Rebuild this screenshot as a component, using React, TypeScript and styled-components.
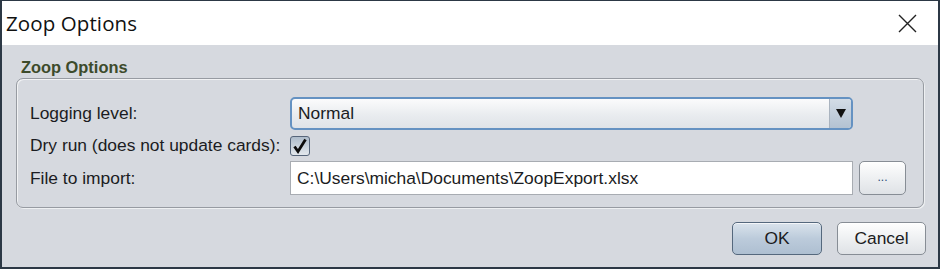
import React from 'react'
import styled, { createGlobalStyle } from 'styled-components'

const GlobalStyle = createGlobalStyle`
  html, body {
    margin: 0;
    padding: 0;
    background: #ffffff;
  }
  * {
    box-sizing: border-box;
  }
`

const LABEL_FONT = `"Liberation Sans", Arial, sans-serif`

const Window = styled.div`
  width: 940px;
  height: 269px;
  display: flex;
  flex-direction: column;
  border: 2px solid #2c3845;
  border-top-width: 1px;
  background: #d6d9df;
  font-family: ${LABEL_FONT};
  color: #1b1c22;
  overflow: hidden;
`

const TitleBar = styled.div`
  height: 44px;
  flex: none;
  display: flex;
  align-items: center;
  justify-content: space-between;
  background: #ffffff;
  padding: 0 21px 0 4px;
`

const Title = styled.div`
  font-family: "Open Sans", "Noto Sans", sans-serif;
  font-size: 20.5px;
  color: #111;
  letter-spacing: 0.1px;
`

const CloseIcon = styled.svg`
  width: 19px;
  height: 19px;
  display: block;
`

const Content = styled.div`
  flex: 1;
  display: flex;
  flex-direction: column;
  padding: 12px 12px 0 14px;
`

const GroupLabel = styled.div`
  font-size: 16.4px;
  font-weight: bold;
  line-height: 20px;
  color: #3d4b2b;
  padding-left: 5px;
  height: 21px;
`

const Group = styled.div`
  width: 908px;
  height: 130px;
  border: 1px solid #979ba2;
  box-shadow: inset 1px 1px 0 #f1f2f4, 1px 1px 0 #eef0f2;
  border-radius: 7px;
  padding: 18px 16px 0 13px;
  display: grid;
  grid-template-columns: 254px 563px 47px;
  grid-template-rows: 33px 25px 34px;
  column-gap: 6px;
  row-gap: 3px;
  align-items: center;
`

const FieldLabel = styled.div`
  font-size: 17.4px;
  white-space: nowrap;
`

const Combo = styled.div`
  grid-column: 2 / 3;
  height: 33px;
  display: flex;
  border: 2px solid #6592c2;
  border-radius: 5px;
  background: linear-gradient(#fbfbfc, #e9ecef 55%, #dfe3e8);
  overflow: hidden;
`

const ComboValue = styled.div`
  flex: 1;
  display: flex;
  align-items: center;
  padding-left: 6px;
  font-size: 17.4px;
`

const ComboArrow = styled.div`
  width: 22px;
  display: flex;
  align-items: center;
  justify-content: center;
  border-left: 1px solid #a9b3bf;
  background: linear-gradient(#d3dce6, #b3c2d2);
`

const Triangle = styled.div`
  width: 0;
  height: 0;
  border-left: 5px solid transparent;
  border-right: 5px solid transparent;
  border-top: 9px solid #111;
`

const CheckBox = styled.div`
  width: 20px;
  height: 20px;
  border: 1px solid #56657a;
  border-radius: 3px;
  background: linear-gradient(#aebccb, #e3e8ed);
  display: flex;
  align-items: center;
  justify-content: center;
`

const TextField = styled.div`
  height: 34px;
  background: #ffffff;
  border: 1px solid #a8acb2;
  display: flex;
  align-items: center;
  padding-left: 6px;
  font-size: 17.4px;
  white-space: nowrap;
`

const Button = styled.div<{ $primary?: boolean; $width: number }>`
  width: ${p => p.$width}px;
  height: 33px;
  display: flex;
  align-items: center;
  justify-content: center;
  font-size: 17.4px;
  border-radius: 5px;
  border: 1px solid ${p => (p.$primary ? '#55687d' : '#878d95')};
  background: ${p =>
    p.$primary
      ? 'linear-gradient(#dae3ec, #bccbdb 50%, #aebfd1)'
      : 'linear-gradient(#fefefe, #eef0f2 50%, #dfe2e6)'};
  box-shadow: inset 0 1px 0 rgba(255, 255, 255, 0.7);
`

const BrowseButton = styled(Button)`
  height: 34px;
  font-size: 12px;
  color: #2c4a78;
  padding-bottom: 2px;
`

const ButtonBar = styled.div`
  display: flex;
  justify-content: flex-end;
  gap: 15px;
  margin-top: 14px;
`

export default function App() {
  return (
    <>
      <GlobalStyle />
      <Window>
        <TitleBar>
          <Title>Zoop Options</Title>
          <CloseIcon viewBox="0 0 19 19">
            <path d="M1 1 L18 18 M18 1 L1 18" stroke="#222" strokeWidth="1.4" fill="none" />
          </CloseIcon>
        </TitleBar>
        <Content>
          <GroupLabel>Zoop Options</GroupLabel>
          <Group>
            <FieldLabel>Logging level:</FieldLabel>
            <Combo>
              <ComboValue>Normal</ComboValue>
              <ComboArrow>
                <Triangle />
              </ComboArrow>
            </Combo>
            <span />
            <FieldLabel>Dry run (does not update cards):</FieldLabel>
            <CheckBox>
              <svg width="16" height="16" viewBox="0 0 16 16">
                <path
                  d="M2.5 8.5 L6 13.5 L13.5 1.5"
                  stroke="#0c0c0c"
                  strokeWidth="2.8"
                  fill="none"
                  strokeLinejoin="miter"
                />
              </svg>
            </CheckBox>
            <span />
            <FieldLabel>File to import:</FieldLabel>
            <TextField>C:\Users\micha\Documents\ZoopExport.xlsx</TextField>
            <BrowseButton $width={47}>...</BrowseButton>
          </Group>
          <ButtonBar>
            <Button $primary $width={90}>
              OK
            </Button>
            <Button $width={89}>Cancel</Button>
          </ButtonBar>
        </Content>
      </Window>
    </>
  )
}
